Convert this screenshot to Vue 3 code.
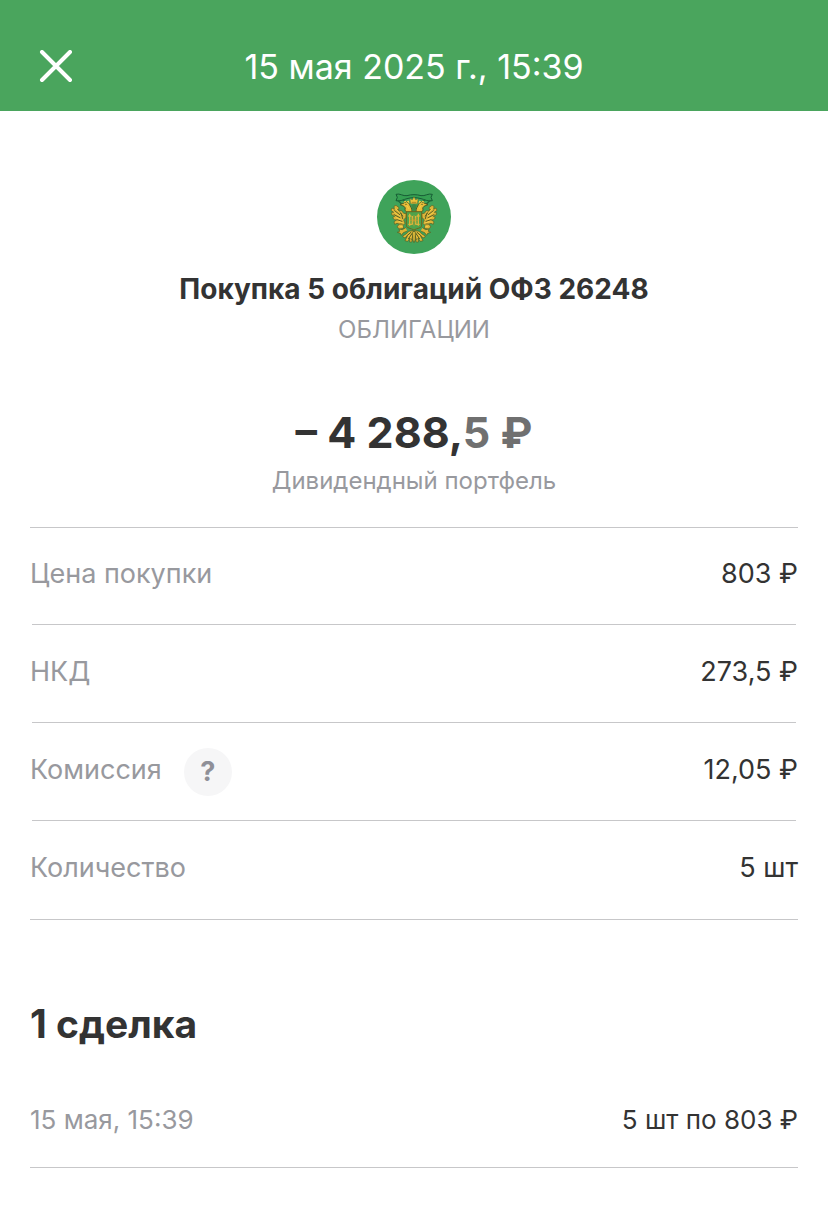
<template>
  <div class="page">
    <header class="header">
      <button class="close-btn" type="button" aria-label="Закрыть">
        <svg viewBox="0 0 34 34" width="34" height="34" aria-hidden="true">
          <path d="M3 2 31 30M31 2 3 30" fill="none" stroke="#fff" stroke-width="4" stroke-linecap="round" />
        </svg>
      </button>
      <h1 class="header-title">{{ operation.date }}</h1>
    </header>

    <main class="content">
      <section class="summary">
        <!-- герб на зелёном круге -->
        <svg class="emblem" viewBox="0 0 222 222" aria-hidden="true">
          <circle cx="111" cy="111" r="111" fill="#3fa35a" />
          <!-- лента -->
          <path
            d="M57 43C68 39 78 49 90 47C102 43 120 43 132 47C144 49 154 39 166 43L162 52L166 62C154 66 142 58 132 56C120 52 102 52 90 56C80 58 68 66 57 62L61 52Z"
            fill="#35a052" stroke="#175c35" stroke-width="3" stroke-linejoin="round"
          />
          <path d="M62 61 76 74M160 61 146 74M78 60 90 68M144 60 132 68" fill="none" stroke="#1f6a3b" stroke-width="4" />
          <g v-for="side in ['', 'translate(222 0) scale(-1 1)']" :key="side" :transform="side">
            <!-- крыло -->
            <path
              d="M57 76 66 83 63 93 74 92 80 100 88 101 87 112 80 120 84 130 78 136 80 145 68 147 60 141 67 132 60 130 53 133 51 125 59 120 52 119 47 113 53 109 44 104 44 97 50 97 42 91 45 84 52 88 51 79Z"
              fill="#ddb53a" stroke="#5a6023" stroke-width="2" stroke-linejoin="round"
            />
            <path
              d="M53 92 68 104M51 104 69 113M60 119 75 124M62 88 77 108M73 101 77 116M68 132 77 132"
              fill="none" stroke="#5a6023" stroke-width="3" stroke-linecap="round"
            />
            <path d="M57 87 68 97M54 98 68 108M58 113 70 118M66 125 77 129M70 140 76 139" fill="none" stroke="#f4ce45" stroke-width="3" stroke-linecap="round" />
            <!-- голова -->
            <path
              d="M105 94C105 84 100 80 98 74C94 66 86 64 81 69L69 74L81 79L85 84C81 92 89 100 102 99Z"
              fill="#e7bb38" stroke="#4f5a21" stroke-width="3" stroke-linejoin="round"
            />
            <path d="M89 76 96 87M81 68 84 63 89 67 94 63 96 70" fill="none" stroke="#f4ce45" stroke-width="3" />
            <circle cx="87" cy="73" r="2" fill="#4f5a21" />
            <!-- лапа -->
            <path d="M86 143 76 149 66 147 68 154 61 157 70 160 73 166 79 158 91 153" fill="#dfb536" stroke="#4f5a21" stroke-width="2" />
            <!-- хвост -->
            <path
              d="M109 151 96 154 86 163 77 168 81 174 91 169 84 182 92 184 99 174 98 186 104 186 109 174Z"
              fill="#e7bc38" stroke="#4f5a21" stroke-width="2" stroke-linejoin="round"
            />
            <path d="M103 156 88 169M106 159 94 177M109 160 104 181" fill="none" stroke="#4f5a21" stroke-width="3" />
          </g>
          <path d="M107 155H115L114 180 111 188 108 180Z" fill="#f1c83f" stroke="#4f5a21" stroke-width="2" />
          <!-- корона -->
          <path
            d="M101 71 99 56 106 60 111 50 116 60 123 56 121 71Z"
            fill="#efc33b" stroke="#5e5a20" stroke-width="1" stroke-linejoin="round"
          />
          <path d="M104 67H118" stroke="#87691c" stroke-width="2" />
          <path d="M103 76 111 72 119 76 116 92H106Z" fill="#3f8844" />
          <!-- щит -->
          <path
            d="M88 95H134V138C132 145 121 144 111 150C101 144 90 145 88 138Z"
            fill="#4ea34b" stroke="#6c671e" stroke-width="3"
          />
          <path
            d="M98 101V137M124 101V137M106 108V134M116 108V134M94 108H103M119 108H128M94 133H104M118 133H128"
            stroke="#dcb43a" stroke-width="4"
          />
          <path d="M98 121H124M103 113 119 130M119 113 103 130M111 105V139" stroke="#c79e31" stroke-width="2" />
        </svg>

        <h2 class="name">{{ operation.name }}</h2>
        <p class="note type">{{ operation.type }}</p>
        <p class="amount">– 4 288,<span class="fraction">5 ₽</span></p>
        <p class="note">{{ operation.portfolio }}</p>
      </section>

      <dl class="details">
        <div v-for="row in rows" :key="row.label" class="row">
          <dt>
            <span class="text">{{ row.label }}</span>
            <button v-if="row.hint" class="hint-btn" type="button" aria-label="Подробнее о комиссии">?</button>
          </dt>
          <dd class="text">{{ row.value }}</dd>
        </div>
      </dl>

      <section class="deals">
        <h2 class="deals-title">1 сделка</h2>
        <ul class="deals-list">
          <li v-for="deal in deals" :key="deal.date" class="deal">
            <span class="deal-date">{{ deal.date }}</span>
            <span>{{ deal.value }}</span>
          </li>
        </ul>
      </section>
    </main>
  </div>
</template>

<script setup>
const operation = {
  date: '15 мая 2025 г., 15:39',
  name: 'Покупка 5 облигаций ОФЗ 26248',
  type: 'ОБЛИГАЦИИ',
  portfolio: 'Дивидендный портфель'
}

const rows = [
  { label: 'Цена покупки', value: '803 ₽' },
  { label: 'НКД', value: '273,5 ₽' },
  { label: 'Комиссия', value: '12,05 ₽', hint: true },
  { label: 'Количество', value: '5 шт' }
]

const deals = [{ date: '15 мая, 15:39', value: '5 шт по 803 ₽' }]
</script>

<style>
body {
  margin: 0;
  background: #fff;
}
</style>

<style scoped>
.page {
  font-family: Inter, "Liberation Sans", sans-serif;
  color: #333;
}

h1,
h2,
p,
dl,
dd,
ul {
  margin: 0;
  padding: 0;
}

button {
  border: none;
  padding: 0;
  font-family: inherit;
  cursor: pointer;
}

.header {
  display: grid;
  grid-template-columns: 52px 1fr 52px;
  align-items: center;
  padding: 23px 30px 0;
  height: 88px;
  background: #4aa55d;
  color: #fff;
}

.close-btn {
  display: flex;
  align-items: center;
  justify-content: center;
  height: 52px;
  background: none;
}

.header-title {
  font-size: 34px;
  line-height: 42px;
  font-weight: 400;
  text-align: center;
}

.content {
  padding: 69px 30px 50px;
}

.summary {
  display: flex;
  flex-direction: column;
  align-items: center;
  padding-bottom: 31px;
  border-bottom: 1px solid #c7c7c9;
  text-align: center;
}

.emblem {
  width: 74px;
  height: 74px;
}

.name {
  margin-top: 18px;
  font-size: 28px;
  line-height: 34px;
  font-weight: 700;
}

.note {
  margin-top: 8px;
  font-size: 24px;
  line-height: 30px;
  color: #98999e;
}

.note.type {
  margin: 9px 0 61px;
}

.amount {
  font-size: 43px;
  line-height: 52px;
  font-weight: 700;
}

.fraction {
  color: #707070;
}

.details {
  border-bottom: 1px solid #c7c7c9;
  font-size: 27px;
  line-height: 34px;
}

.row {
  display: grid;
  grid-template-columns: 1fr auto;
  grid-template-rows: 97px;
  align-items: center;
}

.row:first-child {
  grid-template-rows: 96px;
}

.row:last-child {
  grid-template-rows: 98px;
}

/* внутренние разделители чуть короче внешних */
.row:not(:last-child)::after {
  content: "";
  grid-column: 1 / -1;
  height: 1px;
  margin: 0 2px;
  background: #c7c7c9;
}

.row dt {
  display: flex;
  align-items: center;
  gap: 22px;
  color: #98999e;
}

.row .text {
  padding-bottom: 4px;
}

.hint-btn {
  width: 48px;
  height: 48px;
  border-radius: 50%;
  background: #f6f6f7;
  color: #8f9098;
  font-size: 27px;
  font-weight: 700;
}

.deals-title {
  margin-top: 80px;
  font-size: 39px;
  line-height: 48px;
  font-weight: 700;
}

.deals-list {
  margin-top: 24px;
  list-style: none;
}

.deal {
  display: flex;
  justify-content: space-between;
  padding: 31px 0 30px;
  border-bottom: 1px solid #c7c7c9;
  font-size: 26px;
  line-height: 34px;
}

.deal-date {
  color: #98999e;
}
</style>
